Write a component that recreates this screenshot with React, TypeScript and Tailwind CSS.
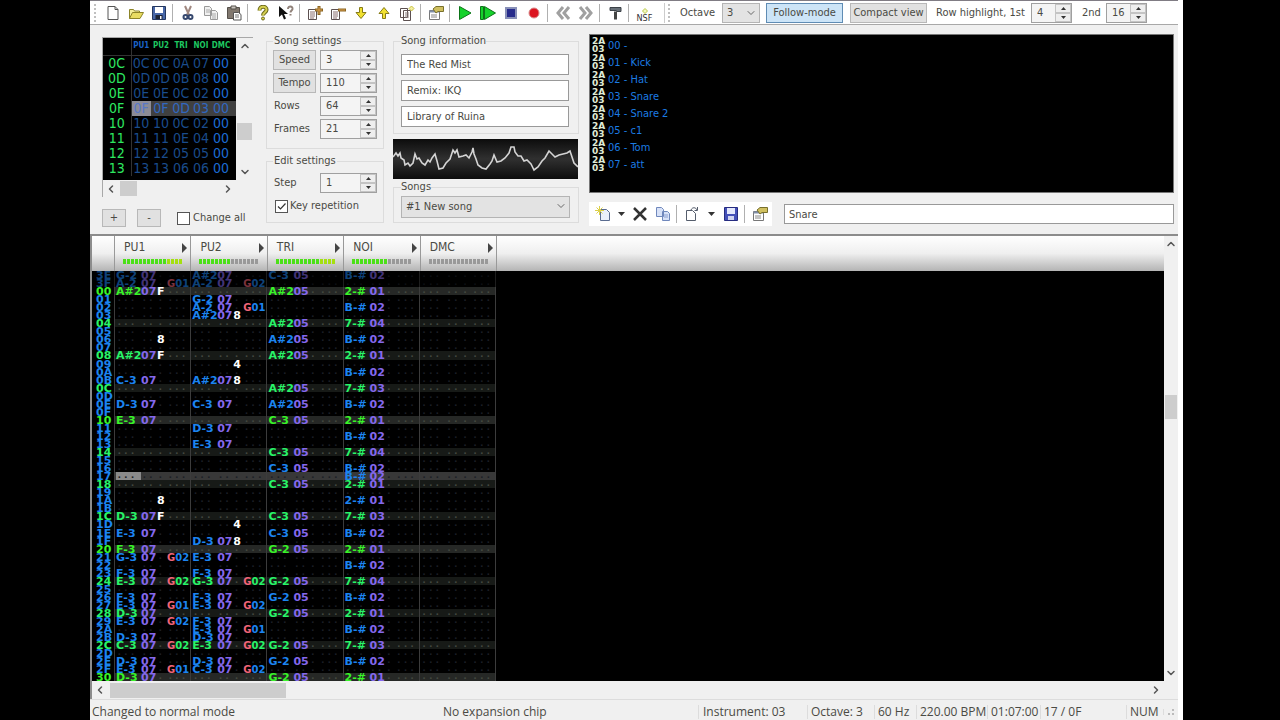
import { useState, type ReactNode } from "react";
import { ChevronDown, ChevronLeft, ChevronRight, ChevronUp } from "lucide-react";
import clsx from "clsx";

const icons: Record<string, ReactNode> = {
  new: <path d="M3 1.5h7l3 3v10H3zM10 1.5v3h3" fill="#fff" stroke="#555" />,
  open: (
    <>
      <path d="M1.5 13.5V4.5h4l1 1.5h5v2" fill="#f4ee9a" stroke="#8c8428" />
      <path d="M1.5 13.5l3-6h11l-3.5 6z" fill="#e8dc62" stroke="#8c8428" />
    </>
  ),
  save: (
    <>
      <path d="M1.5 1.5h13v13h-13z" fill="#4867a8" stroke="#24365e" />
      <path d="M4 2h8v6H4z" fill="#fff" />
      <path d="M4.5 10h7v4h-7z" fill="#1c2333" />
      <path d="M9 11h1.5v3H9z" fill="#fff" />
    </>
  ),
  cut: (
    <>
      <path d="M5 1l4 9M11 1L7 10" stroke="#a08880" strokeWidth="2" />
      <circle cx="5.5" cy="12" r="2" fill="none" stroke="#36486e" strokeWidth="2" />
      <circle cx="10.5" cy="12" r="2" fill="none" stroke="#36486e" strokeWidth="2" />
    </>
  ),
  copy: (
    <>
      <path d="M1.5 1.5h5l2 2v7h-7zM7.5 5.5h5l2 2v7h-7z" fill="#f0f0f0" stroke="#999" />
      <path d="M3 5h4M3 7h4M9 9h4M9 11h4M9 13h4" stroke="#aaa" />
    </>
  ),
  paste: (
    <>
      <path d="M1.5 2.5h12v11h-12z" fill="#81786f" stroke="#55504a" />
      <path d="M5 1h5v3H5z" fill="#c8c4be" stroke="#55504a" />
      <path d="M7.5 7.5h5l2.5 2v5.500h-7.500z" fill="#fff" stroke="#555" />
      <path d="M9 10h4M9 12h4" stroke="#777" />
    </>
  ),
  help: (
    <>
      <path d="M4.500 5.500C4.500 0 12 1 11.500 5c-.3 2.500-3.500 2.500-3.500 5.500" fill="none" stroke="#6d6a1c" strokeWidth="4" />
      <path d="M4.500 5.500C4.500 0 12 1 11.500 5c-.3 2.500-3.500 2.500-3.500 5.500" fill="none" stroke="#d5cf50" strokeWidth="2" />
      <circle cx="8" cy="13.500" r="1.500" fill="#d5cf50" stroke="#6d6a1c" />
    </>
  ),
  context: (
    <>
      <path d="M1 1v11l3-2.500 2 5 2-1-2-4.500h4z" fill="#111" />
      <path d="M10 4c0-3.500 5-3 4.500 0-.3 1.500-2 1.500-2 3.500M12.500 9v1.500" fill="none" stroke="#91827a" strokeWidth="2" />
    </>
  ),
  frameAdd: (
    <>
      <path d="M1.500 4.500h8v10h-8z" fill="#fff" stroke="#5c5050" />
      <path d="M3 7h5M3 9h5M3 11h5M3 13h4" stroke="#8a6f6f" />
      <path d="M12 1v9M8 5h8" stroke="#8a6420" strokeWidth="3" />
      <path d="M12 2v7M9 5h6" stroke="#dca050" />
    </>
  ),
  frameRemove: (
    <>
      <path d="M1.500 4.500h8v10h-8z" fill="#fff" stroke="#5c5050" />
      <path d="M3 7h5M3 9h5M3 11h5M3 13h4" stroke="#8a6f6f" />
      <path d="M8 5h8" stroke="#8a6420" strokeWidth="3" />
      <path d="M9 5h6" stroke="#dca050" />
    </>
  ),
  down: <path d="M6.500 2.500h3v5h3.500L8 13.500 3 7.500h3.500z" fill="#f0e030" stroke="#857a18" />,
  up: <path d="M6.500 13.500h3v-5h3.500L8 2.500 3 8.500h3.500z" fill="#f0e030" stroke="#857a18" />,
  duplicate: (
    <>
      <path d="M1.500 3.500h7v9h-7zM4.500 5.500h7v10h-7z" fill="#fff" stroke="#5c5050" />
      <path d="M6 8h4M6 10h4M6 12h4" stroke="#8a7f7f" />
      <path d="M12.500 1l2.500 2.500L12.500 6 10 3.500z" fill="#f4f0a0" stroke="#c8c040" />
    </>
  ),
  properties: (
    <>
      <path d="M1.500 5.500h10v9h-10z" fill="#fff" stroke="#777" />
      <path d="M1.500 5.500h10v2h-10z" fill="#808ea8" />
      <path d="M3 10h6M3 12h6" stroke="#888" />
      <path d="M5 4l3-2.500h7.500v5H10L8 8z" fill="#d0c060" stroke="#78702c" />
    </>
  ),
  play: <path d="M2.500 1.500l11.500 6.500-11.500 6.500z" fill="#16d22c" stroke="#0c7418" />,
  playLoop: <path d="M.5 1.500h3v13h-3zM4.500 1.500l11 6.500-11 6.500z" fill="#16d22c" stroke="#0c7418" />,
  stop: <path d="M3 3h10v10H3z" fill="#272c8c" stroke="#8890b8" strokeWidth="2" />,
  record: <circle cx="8" cy="8" r="5" fill="#dc1420" stroke="#d88c8c" />,
  prev: <path d="M8 2L3 8l5 6M14 2L9 8l5 6" fill="none" stroke="#a0a0a0" strokeWidth="3" />,
  next: <path d="M2 2l5 6-5 6M8 2l5 6-5 6" fill="none" stroke="#a0a0a0" strokeWidth="3" />,
  module: (
    <>
      <path d="M3 2.500h11v4H9.500v-1H3z" fill="#687078" stroke="#3c4248" />
      <path d="M7 6.500h3v8H7z" fill="#444" />
    </>
  ),
  instNew: (
    <>
      <path d="M5.500 3.500h6l3 3v8h-9z" fill="#eaf0fc" stroke="#5a6c90" />
      <path d="M4.500 0v9M0 4.500h9M1.500 1.500l6 6M7.500 1.500l-6 6" stroke="#dcd048" />
    </>
  ),
  remove: <path d="M2 2l12 12M14 2L2 14" stroke="#333" strokeWidth="2.500" />,
  instCopy: (
    <>
      <path d="M1.500 1.500h5l2 2v7h-7zM7.500 5.500h5l2 2v7h-7z" fill="#d8e2f8" stroke="#7088bc" />
      <path d="M9 9h4M9 11h4" stroke="#8ca0d0" />
    </>
  ),
  load: (
    <>
      <path d="M2.500 4.500h6l3 3v7h-9z" fill="#fff" stroke="#555d6c" />
      <path d="M7 4c1-3 5-3 6 0M13.500 1v3.500h-3" fill="none" stroke="#555d6c" />
    </>
  ),
  instSave: (
    <>
      <path d="M1.500 1.500h13v13h-13z" fill="#4450b8" stroke="#262c80" />
      <path d="M4 2h8v6H4z" fill="#e4e8fc" />
      <path d="M5 10h6v4H5z" fill="#d0d4f0" />
    </>
  ),
};

function Icon({ name }: { name: string }) {
  return (
    <svg viewBox="0 0 16 16" width="16" height="16" fill="none" className="shrink-0" aria-hidden="true">
      {icons[name]}
    </svg>
  );
}

function ToolButton({ name }: { name: string }) {
  return (
    <button type="button" aria-label={name} className="flex h-5 w-[23px] shrink-0 items-center justify-center">
      <Icon name={name} />
    </button>
  );
}

function Separator() {
  return <span className="mx-[2px] h-[18px] w-[2px] shrink-0 border-l border-[#b0b0b0]" />;
}

function Grip() {
  return <span className="h-[18px] w-[2px] shrink-0 border-l-2 border-dotted border-[#c0c0c0]" />;
}

function Spinner({ label, value, className, id }: { label: string; value: string; className?: string; id?: string }) {
  const [text, setText] = useState(value);
  const step = (n: number) => setText(String(Number(text) + n));

  return (
    <span className={clsx("flex h-5 border border-[#a0a0a0] bg-[#f4f4f4]", className)}>
      <input
        id={id}
        aria-label={label}
        value={text}
        onChange={(e) => setText(e.target.value)}
        className="w-0 min-w-0 flex-1 bg-transparent pl-[5px] outline-none"
      />
      <span className="flex w-4 flex-col">
        <button type="button" aria-label={`${label} up`} onClick={() => step(1)} className="flex flex-1 items-center justify-center border border-[#c4c4c4] bg-[#eee]">
          <svg width="5" height="3" viewBox="0 0 5 3"><path d="M0 3L2.500 0 5 3z" fill="#333" /></svg>
        </button>
        <button type="button" aria-label={`${label} down`} onClick={() => step(-1)} className="flex flex-1 items-center justify-center border border-[#c4c4c4] bg-[#eee]">
          <svg width="5" height="3" viewBox="0 0 5 3"><path d="M0 0l2.500 3L5 0z" fill="#333" /></svg>
        </button>
      </span>
    </span>
  );
}

function DropDown({ label, value, className }: { label: string; value: string; className?: string }) {
  return (
    <span className={clsx("relative flex", className)}>
      <select aria-label={label} className="w-full appearance-none border border-[#b4b4b4] bg-[#e3e3e3] pl-1 outline-none">
        <option>{value}</option>
      </select>
      <ChevronDown size={12} strokeWidth={2} className="pointer-events-none absolute top-1 right-[3px] text-[#666]" />
    </span>
  );
}

function Toolbar() {
  const groups = [
    ["new", "open", "save"],
    ["cut", "copy", "paste"],
    ["help", "context"],
    ["frameAdd", "frameRemove", "down", "up", "duplicate"],
    ["properties"],
    ["play", "playLoop", "stop", "record"],
    ["prev", "next"],
    ["module"],
  ];

  return (
    <header className="flex h-[25px] shrink-0 items-center border-t border-b border-t-[#807c84] border-b-[#a8a8a8] bg-white pl-1">
      <Grip />
      <div className="ml-[5px] flex items-center">
        {groups.map((group) => (
          <div key={group[0]} className="flex items-center">
            {group.map((name) => (
              <ToolButton key={name} name={name} />
            ))}
            <Separator />
          </div>
        ))}
        <button type="button" className="flex h-5 w-[25px] flex-col items-center justify-end text-[9px] leading-[9px] text-[#333]">
          <svg width="6" height="6" viewBox="0 0 6 6"><path d="M3 .5L5.500 3 3 5.500.500 3z" fill="#f4f8c0" stroke="#b8c848" /></svg>
          NSF
        </button>
      </div>
      <span className="ml-[7px] h-5 w-1 border-l border-[#ccc]" />
      <Grip />
      <span className="ml-[10px] w-[42px]">Octave</span>
      <DropDown label="Octave" value="3" className="h-5 w-[38px]" />
      <button type="button" className="ml-[6px] h-5 w-[77px] border border-[#5f8cb4] bg-[#cce4f7]">Follow-mode</button>
      <button type="button" className="ml-[7px] h-5 w-[77px] border border-[#b8b8b8] bg-[#e1e1e1]">Compact view</button>
      <span className="ml-[9px] w-[95px] whitespace-nowrap">Row highlight, 1st</span>
      <Spinner label="Row highlight, 1st" value="4" className="w-[41px]" />
      <span className="ml-[10px] w-6">2nd</span>
      <Spinner label="2nd" value="16" className="w-[41px]" />
    </header>
  );
}

const frames = [
  ["0C", "0C", "0C", "0A", "07", "00"],
  ["0D", "0D", "0D", "0B", "08", "00"],
  ["0E", "0E", "0E", "0C", "02", "00"],
  ["0F", "0F", "0F", "0D", "03", "00"],
  ["10", "10", "10", "0C", "02", "00"],
  ["11", "11", "11", "0E", "04", "00"],
  ["12", "12", "12", "05", "05", "00"],
  ["13", "13", "13", "06", "06", "00"],
];

function frameCellStyle(current: boolean, column: number) {
  if (current) return column === 0 ? "bg-[#8c8c96] text-[#5878c8]" : "bg-[#404040] text-[#3068c0]";
  return column === 4 ? "text-[#1c6cd4]" : "text-[#1a4c8c]";
}

function FrameEditor() {
  return (
    <section className="mt-3 w-[151px]">
      <div className="grid grid-cols-[133px_17px] grid-rows-[142px_17px] border-t border-l border-[#a8a8a8]">
        <div className="overflow-hidden bg-black">
          <table className="w-full table-fixed border-collapse text-center text-[14px] leading-[15px]">
            <thead>
              <tr className="h-[17px] border-b border-[#333] text-[8px] leading-[14px] font-bold text-[#1ec860]">
                <th className="w-[28px] border-r border-[#333]" />
                <th className="w-5 text-[#1a62c8]">PU1</th>
                <th className="w-5">PU2</th>
                <th className="w-5">TRI</th>
                <th className="w-5">NOI</th>
                <th className="pr-[5px]">DMC</th>
              </tr>
            </thead>
            <tbody>
              {frames.map(([id, ...cells]) => (
                <tr key={id} className="h-[15px]">
                  <th className="border-r border-[#333] font-normal text-[#2ee860]">{id}</th>
                  {cells.map((cell, i) => (
                    <td key={i} className={clsx(frameCellStyle(id === "0F", i), i === 4 && "pr-[5px]")}>
                      {cell}
                    </td>
                  ))}
                </tr>
              ))}
            </tbody>
          </table>
        </div>
        <div className="flex flex-col items-center bg-[#f0f0f0] py-[2px] text-[#555]">
          <ChevronUp size={12} strokeWidth={3} />
          <span className="mt-[71px] h-[17px] w-[15px] bg-[#cdcdcd]" />
          <ChevronDown size={12} strokeWidth={3} className="mt-auto" />
        </div>
        <div className="flex items-center bg-[#f0f0f0] pr-[2px] pl-[2px] text-[#555]">
          <ChevronLeft size={12} strokeWidth={3} />
          <span className="ml-[3px] h-[15px] w-[17px] bg-[#cdcdcd]" />
          <ChevronRight size={12} strokeWidth={3} className="ml-auto" />
        </div>
      </div>
      <div className="mt-3 flex items-center">
        <button type="button" className="h-[18px] w-6 border border-[#b8b8b8] bg-[#e1e1e1] leading-4">+</button>
        <button type="button" className="ml-[11px] h-[18px] w-6 border border-[#b8b8b8] bg-[#e1e1e1] leading-4">-</button>
        <label className="ml-4 flex items-center gap-[3px] whitespace-nowrap">
          <input type="checkbox" className="size-[13px] appearance-none border border-[#555] bg-white" />
          Change all
        </label>
      </div>
    </section>
  );
}

function Settings() {
  const [repeat, setRepeat] = useState(true);

  return (
    <section className="mt-[9px] ml-[13px] w-[117px]">
      <fieldset className="flex h-[115px] flex-col border border-[#dcdcdc] px-[6px]">
        <legend className="px-px leading-[14px]">Song settings</legend>
        <div className="mt-[2px] grid grid-cols-[43px_57px] gap-x-[4px] gap-y-[3px]">
          <button type="button" className="h-5 border border-[#b8b8b8] bg-[#e1e1e1]">Speed</button>
          <Spinner label="Speed" value="3" />
          <button type="button" className="h-5 border border-[#b8b8b8] bg-[#e1e1e1]">Tempo</button>
          <Spinner label="Tempo" value="110" />
          <label htmlFor="rows" className="self-center pl-px">Rows</label>
          <Spinner id="rows" label="Rows" value="64" />
          <label htmlFor="frames" className="self-center pl-px">Frames</label>
          <Spinner id="frames" label="Frames" value="21" />
        </div>
      </fieldset>
      <fieldset className="mt-[5px] h-[69px] border border-[#dcdcdc] px-[6px]">
        <legend className="px-px leading-[14px]">Edit settings</legend>
        <div className="mt-[5px] grid grid-cols-[43px_57px] gap-x-[4px]">
          <label htmlFor="step" className="self-center pl-px">Step</label>
          <Spinner id="step" label="Step" value="1" />
        </div>
        <label className="mt-[6px] ml-[2px] flex items-center gap-[2px] whitespace-nowrap">
          <span className="grid">
            <input
              type="checkbox"
              checked={repeat}
              onChange={(e) => setRepeat(e.target.checked)}
              className="col-start-1 row-start-1 size-[13px] appearance-none border border-[#555] bg-white"
            />
            {repeat && (
              <svg viewBox="0 0 13 13" className="pointer-events-none col-start-1 row-start-1 size-[13px]">
                <path d="M3 6.500L5.500 9 10.500 3.500" fill="none" stroke="#333" strokeWidth="1.200" />
              </svg>
            )}
          </span>
          Key repetition
        </label>
      </fieldset>
    </section>
  );
}

const wave =
  "0,18 3,14 5,17 7,14 8,19 11,21 12,26 15,24 17,27 20,24 22,15 24,20 26,19 29,24 32,26 35,21 37,23 39,19 42,15 44,22 46,30 50,29 53,24 57,20 60,11 62,14 64,11 66,18 70,17 73,16 76,19 79,13 80,9 81,15 83,20 85,26 89,29 93,30 97,25 99,22 101,16 104,23 108,22 112,19 116,14 118,8 121,8 122,13 125,17 128,17 131,22 134,21 138,25 141,31 145,28 149,22 152,19 156,12 159,15 162,18 166,16 170,15 174,14 177,12 179,18 181,24 185,28";

function SongInfo() {
  return (
    <section className="mt-[9px] ml-[10px] w-[186px]">
      <fieldset className="h-[100px] border border-[#dcdcdc] px-[7px]">
        <legend className="leading-[14px]">Song information</legend>
        <div className="mt-[6px] flex flex-col gap-[5px] pr-[2px]">
          <input aria-label="Title" defaultValue="The Red Mist" className="h-[21px] border border-[#999] bg-white px-[5px]" />
          <input aria-label="Artist" defaultValue="Remix: IKQ" className="h-[21px] border border-[#999] bg-white px-[5px]" />
          <input aria-label="Copyright" defaultValue="Library of Ruina" className="h-[21px] border border-[#999] bg-white px-[5px]" />
        </div>
      </fieldset>
      <svg viewBox="0 0 185 40" className="mt-[5px] h-10 w-[185px]" role="img" aria-label="Waveform">
        <defs>
          <linearGradient id="scope" x1="0" y1="0" x2="0" y2="1">
            <stop offset="0" stopColor="#0c0c0c" />
            <stop offset=".5" stopColor="#303030" />
            <stop offset="1" stopColor="#0c0c0c" />
          </linearGradient>
        </defs>
        <rect width="185" height="40" fill="url(#scope)" />
        <polyline points={wave} fill="none" stroke="#d4d4d4" strokeWidth="1.600" />
      </svg>
      <fieldset className="mt-px h-[43px] border border-[#dcdcdc] px-[7px]">
        <legend className="leading-[14px]">Songs</legend>
        <DropDown label="Songs" value="#1 New song" className="mt-[2px] h-[22px] w-[169px]" />
      </fieldset>
    </section>
  );
}

const instruments = ["00 -", "01 - Kick", "02 - Hat", "03 - Snare", "04 - Snare 2", "05 - c1", "06 - Tom", "07 - att"];

function Instruments() {
  return (
    <section className="mt-[9px] mr-1 ml-[10px] flex min-w-0 flex-1 flex-col">
      <ul className="h-[159px] border border-[#777] bg-black pt-[2px] pl-[2px] text-[#1c7ce4]">
        {instruments.map((name) => (
          <li key={name} className="flex h-[17px] items-start gap-1 leading-[17px]">
            <span className="flex w-3 flex-col font-['DejaVu_Sans',sans-serif] text-[9px] leading-[8px] font-bold text-[#e0ecd8]">
              <span>2A</span>
              <span>03</span>
            </span>
            {name}
          </li>
        ))}
      </ul>
      <div className="mt-[9px] flex items-center">
        <div className="flex h-6 w-[183px] items-center bg-white pl-[2px]">
          <ToolButton name="instNew" />
          <button type="button" aria-label="New instrument menu" className="flex w-[14px] justify-center">
            <svg width="7" height="4" viewBox="0 0 7 4"><path d="M0 0h7L3.500 4z" fill="#333" /></svg>
          </button>
          <ToolButton name="remove" />
          <ToolButton name="instCopy" />
          <Separator />
          <ToolButton name="load" />
          <button type="button" aria-label="Load instrument menu" className="flex w-4 justify-center">
            <svg width="7" height="4" viewBox="0 0 7 4"><path d="M0 0h7L3.500 4z" fill="#333" /></svg>
          </button>
          <ToolButton name="instSave" />
          <Separator />
          <ToolButton name="properties" />
        </div>
        <input aria-label="Instrument name" defaultValue="Snare" className="ml-3 h-5 min-w-0 flex-1 border border-[#999] bg-white px-1" />
      </div>
    </section>
  );
}

const channels = [
  { name: "PU1", level: 15 },
  { name: "PU2", level: 8 },
  { name: "TRI", level: 15 },
  { name: "NOI", level: 9 },
  { name: "DMC", level: 0 },
];

// row id, then PU1 / PU2 / TRI / NOI as "note inst vol effect"
const rows: string[][] = [
  ["3E", "G-2 07", "A#2 07", "C-3 05", "B-# 02"],
  ["3F", "A-2 07 . G01", "A-2 07 . G02"],
  ["00", "A#2 07 F", "", "A#2 05", "2-# 01"],
  ["01", "", "G-2 07"],
  ["02", "", "A-2 07 . G01", "", "B-# 02"],
  ["03", "", "A#2 07 8"],
  ["04", "", "", "A#2 05", "7-# 04"],
  ["05"],
  ["06", "... .. 8", "", "A#2 05", "B-# 02"],
  ["07"],
  ["08", "A#2 07 F", "", "A#2 05", "2-# 01"],
  ["09", "", "... .. 4"],
  ["0A", "", "", "", "B-# 02"],
  ["0B", "C-3 07", "A#2 07 8"],
  ["0C", "", "", "A#2 05", "7-# 03"],
  ["0D"],
  ["0E", "D-3 07", "C-3 07", "A#2 05", "B-# 02"],
  ["0F"],
  ["10", "E-3 07", "", "C-3 05", "2-# 01"],
  ["11", "", "D-3 07"],
  ["12", "", "", "", "B-# 02"],
  ["13", "", "E-3 07"],
  ["14", "", "", "C-3 05", "7-# 04"],
  ["15"],
  ["16", "", "", "C-3 05", "B-# 02"],
  ["17", "", "", "", "B-# 02"],
  ["18", "", "", "C-3 05", "2-# 01"],
  ["19"],
  ["1A", "... .. 8", "", "", "2-# 01"],
  ["1B"],
  ["1C", "D-3 07 F", "", "C-3 05", "7-# 03"],
  ["1D", "", "... .. 4"],
  ["1E", "E-3 07", "", "C-3 05", "B-# 02"],
  ["1F", "", "D-3 07 8"],
  ["20", "F-3 07", "", "G-2 05", "2-# 01"],
  ["21", "G-3 07 . G02", "E-3 07"],
  ["22", "", "", "", "B-# 02"],
  ["23", "F-3 07", "F-3 07"],
  ["24", "E-3 07 . G02", "G-3 07 . G02", "G-2 05", "7-# 04"],
  ["25"],
  ["26", "F-3 07", "F-3 07", "G-2 05", "B-# 02"],
  ["27", "E-3 07 . G01", "E-3 07 . G02"],
  ["28", "D-3 07", "", "G-2 05", "2-# 01"],
  ["29", "E-3 07 . G02", "F-3 07"],
  ["2A", "", "E-3 07 . G01", "", "B-# 02"],
  ["2B", "D-3 07", "D-3 07"],
  ["2C", "C-3 07 . G02", "E-3 07 . G02", "G-2 05", "7-# 03"],
  ["2D"],
  ["2E", "D-3 07", "D-3 07", "G-2 05", "B-# 02"],
  ["2F", "E-3 07 . G01", "C-3 07 . G02"],
  ["30", "D-3 07", "", "G-2 05", "2-# 01"],
];

function Field({ value, blank, className, color, dots }: { value?: string; blank: string; className?: string; color: string; dots: string }) {
  const empty = !value || value.startsWith(".");

  return <span className={clsx("h-2", className, empty ? dots : color)}>{empty ? blank : value}</span>;
}

function Cell({ data = "", color, lit, cursor }: { data?: string; color: string; lit: boolean; cursor: boolean }) {
  const [note, inst, vol, fx] = data.split(" ");
  const dots = clsx("font-['Liberation_Mono',monospace]", lit ? "text-[#444840]" : "text-[#1c1f26]");

  return (
    <div className="flex min-w-0 flex-1 items-center border-l border-[#3c3c3c] pl-px">
      <Field value={note} blank="···" color={color} dots={dots} className={clsx("w-[25px]", cursor && "bg-[#8a8a8a]")} />
      <Field value={inst} blank="··" color="text-[#8468ec]" dots={dots} className="w-4" />
      <Field value={vol} blank="·" color="text-white" dots={dots} className="w-[10px]" />
      {fx ? (
        <span className={clsx("h-2 text-[10px]", color)}>
          <span className="text-[#f06478]">{fx[0]}</span>
          {fx.slice(1)}
        </span>
      ) : (
        <span className={clsx("h-2", dots)}>···</span>
      )}
    </div>
  );
}

function PatternRow({ row, index }: { row: string[]; index: number }) {
  const n = parseInt(row[0], 16);
  const previous = index < 2;
  const bar = n % 16 === 0;
  const beat = n % 4 === 0;
  const cursor = row[0] === "17";
  const color = bar ? "text-[#38f428]" : beat ? "text-[#28f468]" : "text-[#1c84f0]";

  return (
    <div className={clsx("flex min-h-2 flex-1 basis-0 items-stretch", previous && "opacity-50")}>
      <span className={clsx("w-[22px] pl-1", color)}>{row[0]}</span>
      <div className={clsx("flex w-[382px] border-r border-[#3c3c3c]", cursor ? "bg-[#383838]" : bar ? "bg-[#262826]" : beat && "bg-[#171a17]")}>
        {channels.map((c, i) => (
          <Cell key={c.name} data={row[i + 1]} color={color} lit={beat} cursor={cursor && i === 0} />
        ))}
      </div>
    </div>
  );
}

function PatternEditor() {
  return (
    <main className="flex min-h-0 flex-1 flex-col border-t-2 border-l-2 border-[#8c8c8c] bg-[#f0f0f0]">
      <div className="flex min-h-0 flex-1">
        <div className="flex min-w-0 flex-1 flex-col">
          <div className="flex h-[35px] shrink-0 bg-linear-to-b from-white via-[#efefef] to-[#b4b4b4]">
            <div className="w-[22px]" />
            <div className="flex w-[383px] border-r border-[#999]">
              {channels.map((c) => (
                <div key={c.name} className="flex flex-1 flex-col border-l border-[#999] pt-[4px] pr-[3px] pl-2">
                  <div className="flex items-center justify-between pl-px leading-[15px]">
                    <span className="text-[12px]">{c.name}</span>
                    <svg width="5" height="10" viewBox="0 0 5 10"><path d="M0 0l5 5-5 5z" fill="#444" /></svg>
                  </div>
                  <div className="mt-[4px] flex gap-px">
                    {Array.from({ length: 15 }, (_, i) => (
                      <span
                        key={i}
                        className={clsx("h-[5px] w-[3px]", i >= c.level ? "bg-[#999]" : i > 10 ? "bg-[#a4e010]" : "bg-[#4ce018]")}
                      />
                    ))}
                  </div>
                </div>
              ))}
            </div>
          </div>
          <div className="flex min-h-0 flex-1 flex-col overflow-hidden bg-black font-['DejaVu_Sans',sans-serif] text-[11px] leading-[10px] font-bold">
            {rows.map((row, i) => (
              <PatternRow key={row[0]} row={row} index={i} />
            ))}
          </div>
        </div>
        <div className="flex w-[14px] flex-col items-center py-[2px] text-[#555]">
          <ChevronUp size={12} strokeWidth={3} />
          <span className="flex-[146] basis-0" />
          <span className="h-6 w-3 bg-[#cdcdcd]" />
          <span className="flex-[250] basis-0" />
          <ChevronDown size={12} strokeWidth={3} />
        </div>
      </div>
      <div className="flex h-[18px] shrink-0 items-center pr-4 pl-[2px] text-[#555]">
        <ChevronLeft size={12} strokeWidth={3} />
        <span className="ml-1 h-[15px] w-[176px] bg-[#cdcdcd]" />
        <ChevronRight size={12} strokeWidth={3} className="ml-auto" />
      </div>
    </main>
  );
}

function StatusBar() {
  return (
    <footer className="flex h-[21px] shrink-0 items-center border-t border-[#dcdcdc] pt-1 pl-[2px] font-['Open_Sans',sans-serif] text-[12px] whitespace-nowrap">
      <span className="flex-1 basis-0">Changed to normal mode</span>
      <span className="w-[255px]">No expansion chip</span>
      <span className="w-[109px] border-l border-[#dcdcdc] pl-1">Instrument: 03</span>
      <span className="w-[67px] border-l border-[#dcdcdc] pl-[3px]">Octave: 3</span>
      <span className="w-[42px] border-l border-[#dcdcdc] pl-[3px]">60 Hz</span>
      <span className="w-[71px] border-l border-[#dcdcdc] pl-[3px]">220.00 BPM</span>
      <span className="w-[53px] border-l border-[#dcdcdc] pl-[3px]">01:07:00</span>
      <span className="w-[55px] border-l border-[#dcdcdc] pl-[3px]">17 / 0F</span>
      <span className="w-[31px] border-l border-[#dcdcdc]" />
      <span className="w-[37px] border-l border-[#dcdcdc] pl-[3px]">NUM</span>
      <span className="flex w-[15px] items-end justify-end border-l border-[#dcdcdc] pr-1">
        <svg width="6" height="6" viewBox="0 0 6 6"><path d="M4 0h2v2H4zM0 4h2v2H0zM4 4h2v2H4z" fill="#bbb" /></svg>
      </span>
    </footer>
  );
}

export default function App() {
  return (
    <div className="min-h-screen bg-black pr-[97px] pl-[90px]">
      <div className="flex min-h-screen flex-col border-r-[5px] border-white bg-[#f0f0f0] font-['DejaVu_Sans_Condensed','DejaVu_Sans',sans-serif] text-[11px] leading-[14px] text-[#4a4a44]">
        <Toolbar />
        <div className="flex h-[209px] shrink-0 pl-3">
          <FrameEditor />
          <Settings />
          <SongInfo />
          <Instruments />
        </div>
        <PatternEditor />
        <StatusBar />
      </div>
    </div>
  );
}
